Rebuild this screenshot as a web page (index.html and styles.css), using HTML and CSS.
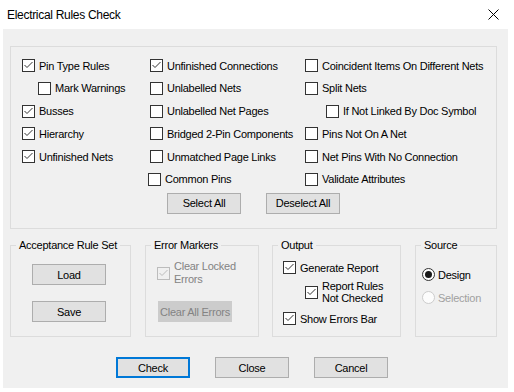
FILE: index.html
```html
<!DOCTYPE html>
<html lang="en">
<head>
    <meta charset="UTF-8">
    <title>Electrical Rules Check</title>
    <link rel="stylesheet" href="styles.css">
</head>
<body>
    <header class="titlebar">
        <span class="title">Electrical Rules Check</span>
        <svg class="close-x" width="11" height="11" viewBox="0 0 11 11">
            <path d="M0.5 0.5 L10.5 10.5 M10.5 0.5 L0.5 10.5" stroke="#000" stroke-width="1" fill="none"/>
        </svg>
    </header>

    <main class="panel">
        <section class="rules">
            <div class="rule-grid">
                <div class="col">
                    <label class="chk"><span class="box"><svg viewBox="0 0 11 11"><polyline points="1.5,5 4,7.5 9.5,2"/></svg></span>Pin Type Rules</label>
                    <label class="chk indent-mark"><span class="box"></span>Mark Warnings</label>
                    <label class="chk"><span class="box"><svg viewBox="0 0 11 11"><polyline points="1.5,5 4,7.5 9.5,2"/></svg></span>Busses</label>
                    <label class="chk"><span class="box"><svg viewBox="0 0 11 11"><polyline points="1.5,5 4,7.5 9.5,2"/></svg></span>Hierarchy</label>
                    <label class="chk"><span class="box"><svg viewBox="0 0 11 11"><polyline points="1.5,5 4,7.5 9.5,2"/></svg></span>Unfinished Nets</label>
                </div>
                <div class="col">
                    <label class="chk"><span class="box"><svg viewBox="0 0 11 11"><polyline points="1.5,5 4,7.5 9.5,2"/></svg></span>Unfinished Connections</label>
                    <label class="chk"><span class="box"></span>Unlabelled Nets</label>
                    <label class="chk"><span class="box"></span>Unlabelled Net Pages</label>
                    <label class="chk"><span class="box"></span>Bridged 2-Pin Components</label>
                    <label class="chk"><span class="box"></span>Unmatched Page Links</label>
                    <label class="chk shift-left"><span class="box"></span>Common Pins</label>
                </div>
                <div class="col">
                    <label class="chk"><span class="box"></span>Coincident Items On Different Nets</label>
                    <label class="chk"><span class="box"></span>Split Nets</label>
                    <label class="chk indent-link"><span class="box"></span>If Not Linked By Doc Symbol</label>
                    <label class="chk"><span class="box"></span>Pins Not On A Net</label>
                    <label class="chk"><span class="box"></span>Net Pins With No Connection</label>
                    <label class="chk"><span class="box"></span>Validate Attributes</label>
                </div>
            </div>
            <div class="select-row">
                <button class="btn">Select All</button>
                <button class="btn">Deselect All</button>
            </div>
        </section>

        <div class="lower">
            <fieldset class="group group-accept">
                <legend>Acceptance Rule Set</legend>
                <div class="group-body">
                    <button class="btn load-btn">Load</button>
                    <button class="btn save-btn">Save</button>
                </div>
            </fieldset>

            <fieldset class="group group-markers">
                <legend>Error Markers</legend>
                <div class="group-body">
                    <label class="chk chk-multi disabled"><span class="box"><svg viewBox="0 0 11 11"><polyline points="1.5,5 4,7.5 9.5,2"/></svg></span><span>Clear Locked<br>Errors</span></label>
                    <button class="btn btn-disabled">Clear All Errors</button>
                </div>
            </fieldset>

            <fieldset class="group group-output">
                <legend>Output</legend>
                <div class="group-body">
                    <label class="chk first-row"><span class="box"><svg viewBox="0 0 11 11"><polyline points="1.5,5 4,7.5 9.5,2"/></svg></span>Generate Report</label>
                    <label class="chk chk-multi tight indent-report"><span class="box"><svg viewBox="0 0 11 11"><polyline points="1.5,5 4,7.5 9.5,2"/></svg></span><span>Report Rules<br>Not Checked</span></label>
                    <label class="chk errors-bar"><span class="box"><svg viewBox="0 0 11 11"><polyline points="1.5,5 4,7.5 9.5,2"/></svg></span>Show Errors Bar</label>
                </div>
            </fieldset>

            <fieldset class="group group-source">
                <legend>Source</legend>
                <div class="group-body">
                    <label class="radio"><span class="dot on"></span>Design</label>
                    <label class="radio disabled"><span class="dot"></span>Selection</label>
                </div>
            </fieldset>
        </div>

        <div class="actions">
            <button class="btn btn-default">Check</button>
            <button class="btn">Close</button>
            <button class="btn">Cancel</button>
        </div>
    </main>
</body>
</html>
```

FILE: styles.css
```css
body {
    margin: 0;
    width: 514px;
    height: 392px;
    overflow: hidden;
    background-color: #ffffff;
    color: #000000;
    font-family: 'Liberation Sans', Arial, sans-serif;
    font-size: 11px;
    letter-spacing: -0.25px;
}

.titlebar {
    height: 29px;
    display: flex;
    align-items: center;
    justify-content: space-between;
    padding: 0 15px 0 7px;
}

.title {
    font-size: 12px;
    letter-spacing: -0.3px;
}

.close-x {
    display: block;
}

.panel {
    box-sizing: border-box;
    height: 359px;
    margin: 0 6px 0 3px;
    padding: 17px 11px 0 7px;
    background-color: #f0f0f0;
}

/* top group with all the rule checkboxes */
.rules {
    box-sizing: border-box;
    height: 183px;
    border: 1px solid #dcdcdc;
    padding: 12px 0 0 11px;
}

.rule-grid {
    display: grid;
    grid-template-columns: 128px 155px auto;
}

.col {
    display: flex;
    flex-direction: column;
    gap: 9.8px;
}

.chk,
.radio {
    display: flex;
    align-items: center;
    gap: 4px;
    height: 13px;
    white-space: nowrap;
}

.box {
    box-sizing: border-box;
    flex: none;
    width: 13px;
    height: 13px;
    border: 1px solid #333333;
    background-color: #ffffff;
}

.box svg {
    display: block;
    width: 11px;
    height: 11px;
}

.box polyline {
    fill: none;
    stroke: #333333;
    stroke-width: 1;
}

.indent-mark {
    margin-left: 16px;
}

.indent-link {
    margin-left: 21px;
}

.shift-left {
    margin-left: -2px;
}

.select-row {
    display: flex;
    gap: 25px;
    margin: 7px 0 0 145px;
}

.btn {
    box-sizing: border-box;
    width: 74px;
    height: 21px;
    padding: 0;
    border: 1px solid #adadad;
    background-color: #e1e1e1;
    color: #000000;
    font: inherit;
    letter-spacing: inherit;
    white-space: nowrap;
}

.btn-default {
    border: 2px solid #0078d7;
}

.btn-disabled {
    border-color: #cccccc;
    background-color: #cccccc;
    color: #838383;
}

/* bottom row of group boxes */
.lower {
    display: flex;
    margin-top: 10px;
}

.group {
    box-sizing: border-box;
    height: 98px;
    margin: 0;
    padding: 0;
    border: 1px solid #dcdcdc;
    min-width: 0;
}

.group legend {
    margin: 0 auto 0 5px;
    padding: 0 3px;
    line-height: 13px;
    white-space: nowrap;
}

.group-accept {
    width: 121px;
}

.group-markers {
    width: 114px;
    margin-left: 14px;
}

.group-output {
    width: 129px;
    margin-left: 13px;
}

.group-source {
    width: 82px;
    margin-left: 14px;
}

.group-accept .group-body {
    padding-left: 21px;
}

.group-markers .group-body {
    padding-left: 11px;
}

.group-output .group-body {
    padding-left: 10px;
}

.group-source .group-body {
    padding-left: 6px;
}

.load-btn {
    display: block;
    margin-top: 12px;
}

.save-btn {
    display: block;
    margin-top: 16px;
}

.chk-multi {
    height: auto;
    line-height: 13px;
}

.chk-multi.tight {
    line-height: 12px;
}

.group-markers .chk-multi {
    margin-top: 8px;
}

.group-markers .btn {
    display: block;
    margin: 15px 0 0 1px;
}

.disabled {
    color: #838383;
}

.disabled .box {
    border-color: #bcbcbc;
    background-color: #f0f0f0;
}

.disabled .box polyline {
    stroke: #bcbcbc;
}

.first-row {
    margin-top: 9px;
}

.indent-report {
    margin: 6px 0 0 22px;
}

.errors-bar {
    margin-top: 8px;
}

.radio {
    gap: 3px;
}

.group-source .radio:first-child {
    margin-top: 16px;
}

.group-source .radio + .radio {
    margin-top: 10px;
}

.dot {
    box-sizing: border-box;
    flex: none;
    width: 13px;
    height: 13px;
    border: 1px solid #333333;
    border-radius: 50%;
    background-color: #ffffff;
    display: flex;
    align-items: center;
    justify-content: center;
}

.dot.on::after {
    content: '';
    width: 7px;
    height: 7px;
    border-radius: 50%;
    background-color: #1a1a1a;
}

.radio.disabled {
    color: #a0a0a0;
}

.radio.disabled .dot {
    border-color: #cccccc;
    background-color: #fcfcfc;
}

.actions {
    display: flex;
    gap: 25px;
    margin: 20px 0 0 106px;
}
```
